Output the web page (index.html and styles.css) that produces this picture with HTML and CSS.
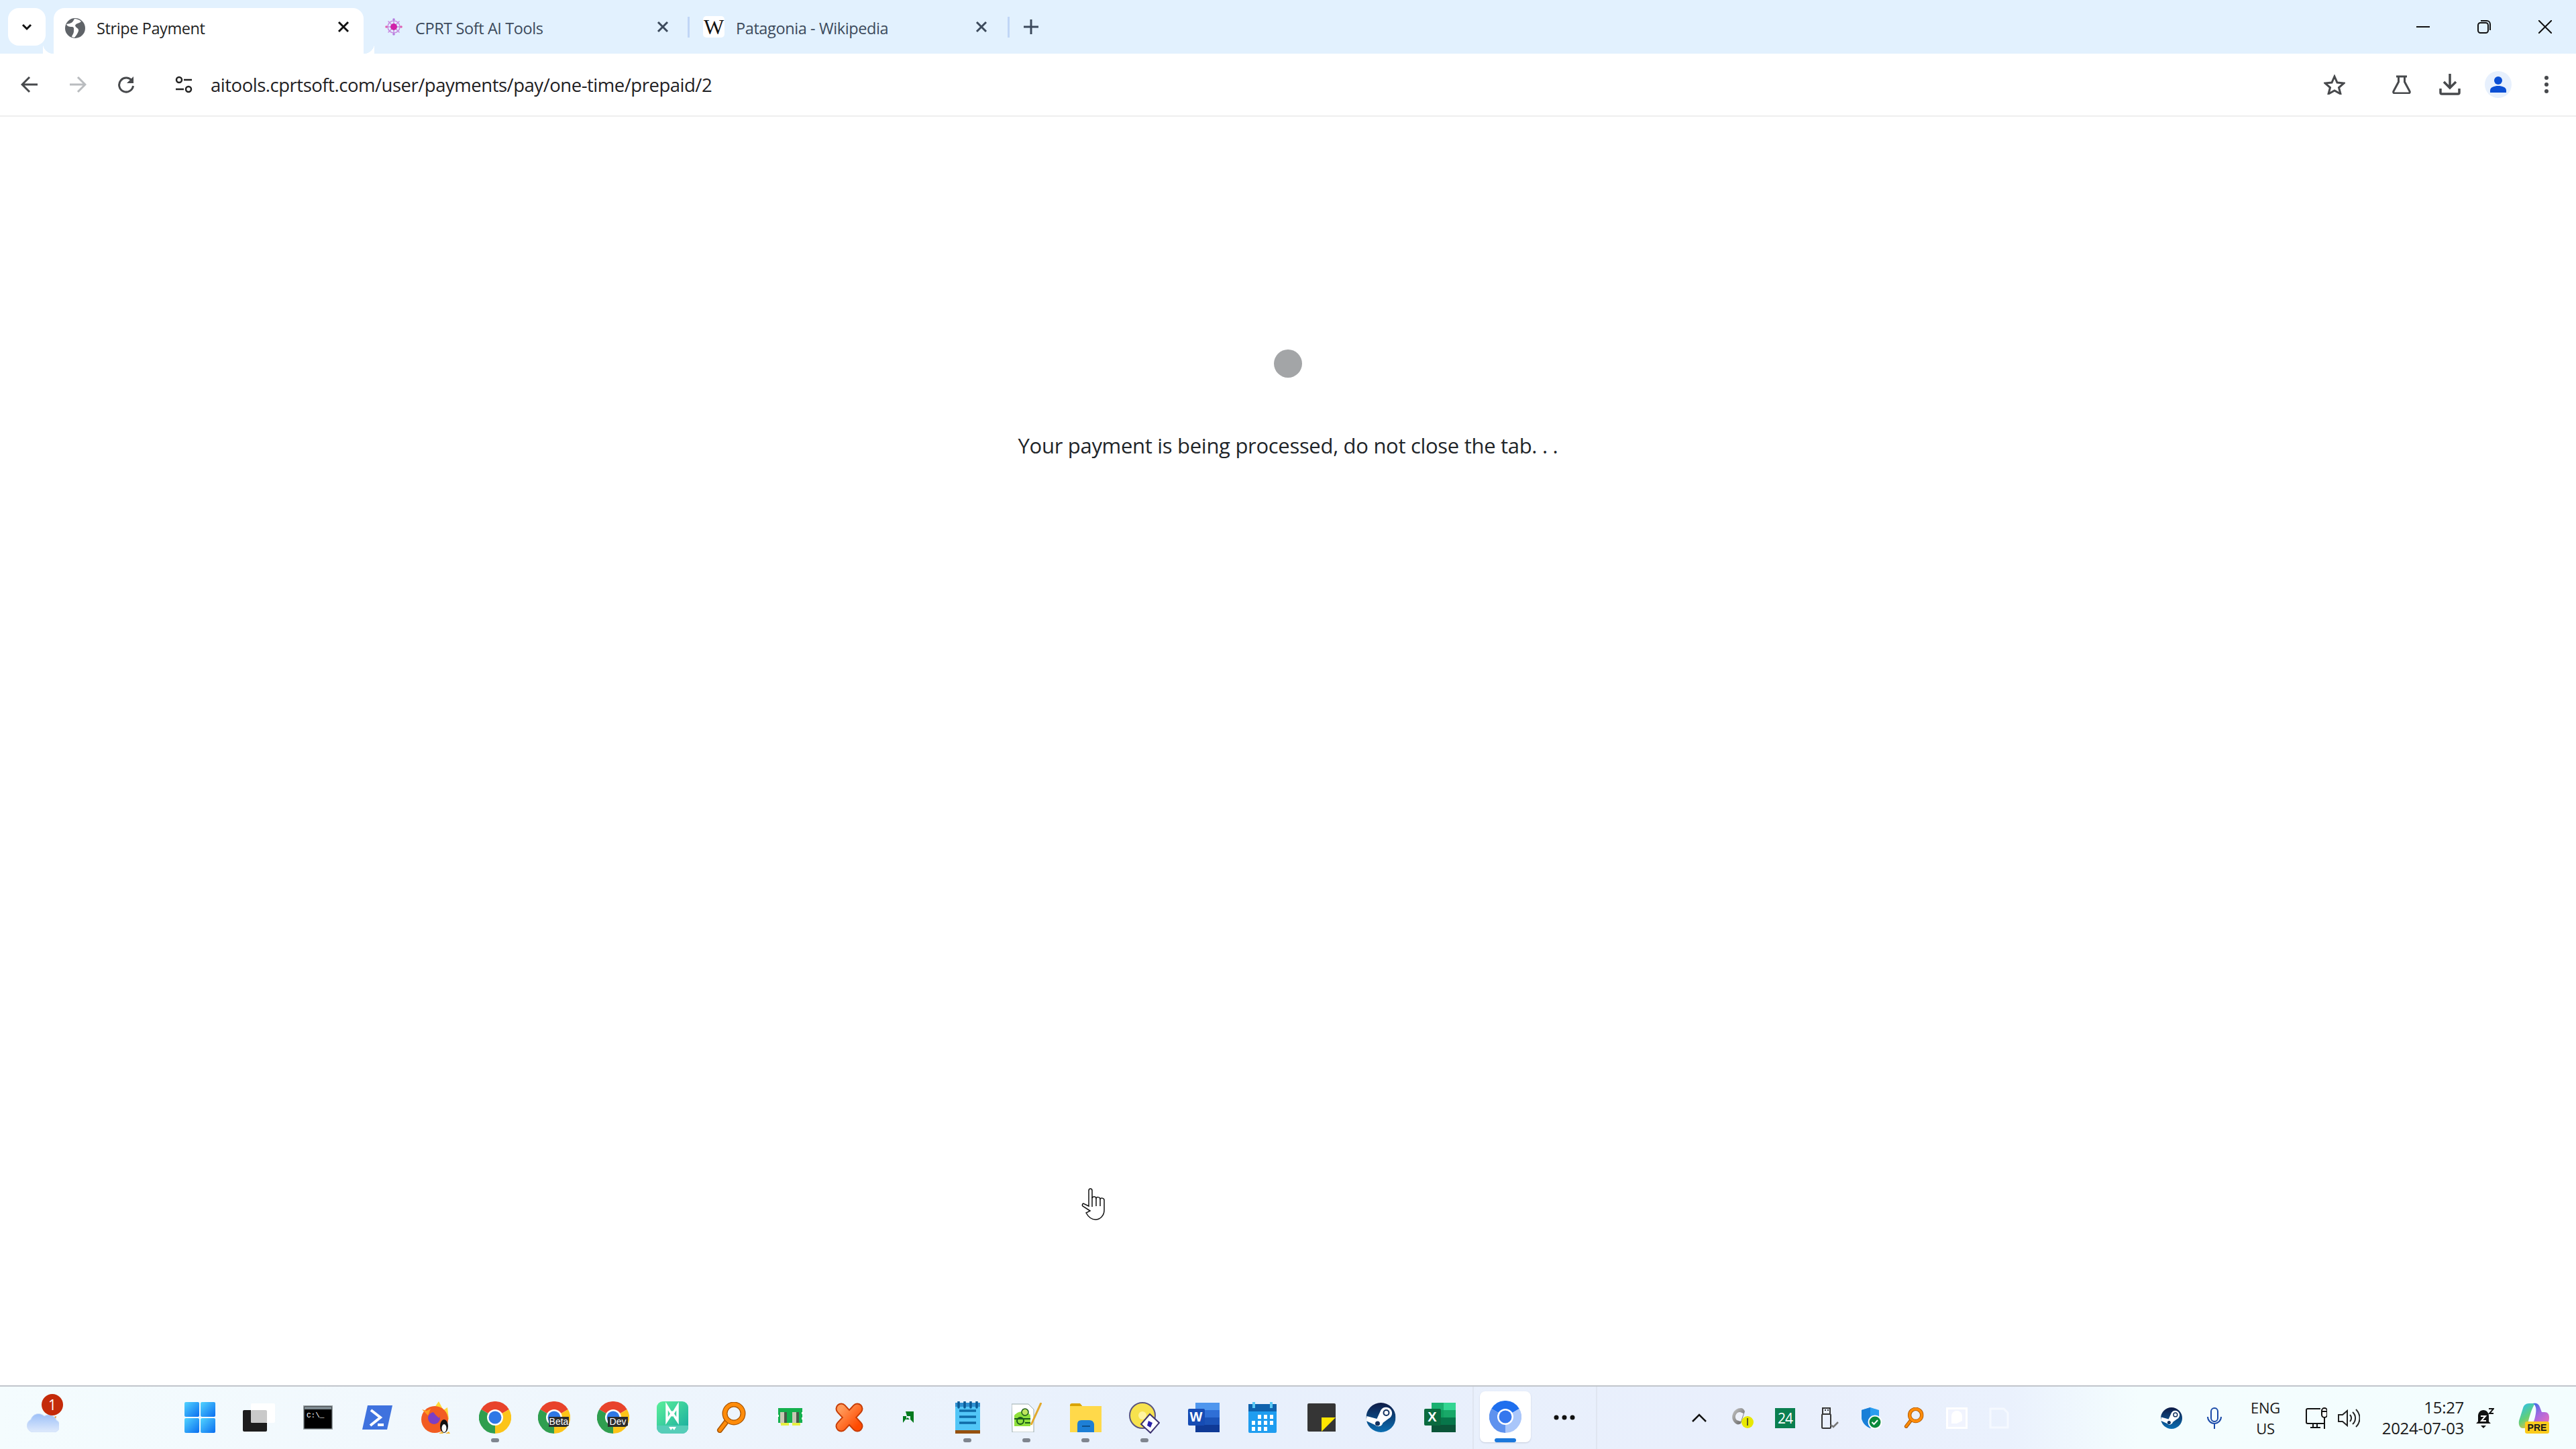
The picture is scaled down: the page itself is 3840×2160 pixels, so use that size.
FILE: index.html
```html
<!DOCTYPE html>
<html lang="en">
<head>
<meta charset="utf-8">
<title>Stripe Payment</title>
<link rel="stylesheet" href="styles.css">
</head>
<body>
<svg class="defs" width="0" height="0">
  <defs>
    <linearGradient id="gStart" x1="0" y1="0" x2="1" y2="1"><stop offset="0" stop-color="#52d4ff"/><stop offset="1" stop-color="#0a6ef0"/></linearGradient>
    <linearGradient id="gCloud" x1="0" y1="0" x2="0" y2="1"><stop offset="0" stop-color="#9cc0f8"/><stop offset="1" stop-color="#dfeafc"/></linearGradient>
    <linearGradient id="gWs" x1="0" y1="0" x2="1" y2="1"><stop offset="0" stop-color="#5cf09a"/><stop offset="1" stop-color="#15a9a0"/></linearGradient>
    <linearGradient id="gX" x1="0" y1="0" x2="1" y2="1"><stop offset="0" stop-color="#ff9a5a"/><stop offset="1" stop-color="#ff4a00"/></linearGradient>
    <linearGradient id="gSteam" x1="0" y1="0" x2="0" y2="1"><stop offset="0" stop-color="#0e1b46"/><stop offset="1" stop-color="#0b6eb2"/></linearGradient>
    <linearGradient id="gCop" x1="0.2" y1="0" x2="0.7" y2="1"><stop offset="0" stop-color="#2ec0ea"/><stop offset=".55" stop-color="#62cf78"/><stop offset="1" stop-color="#f0c040"/></linearGradient>
    <linearGradient id="gCop2" x1="0" y1="0" x2="0.8" y2="1"><stop offset="0" stop-color="#2070e8"/><stop offset=".5" stop-color="#a868e0"/><stop offset="1" stop-color="#ee70b8"/></linearGradient>
    <linearGradient id="gCloudT" x1="0" y1="0" x2="1" y2="1"><stop offset="0" stop-color="#c9c9c9"/><stop offset="1" stop-color="#5c5c5c"/></linearGradient>
    <symbol id="chrome" viewBox="0 0 48 48">
      <path d="M24 24L3.2 12A24 24 0 0 1 44.8 12Z" fill="#e8432b"/>
      <path d="M24 24L44.8 12A24 24 0 0 1 24 48Z" fill="#fcc419"/>
      <path d="M24 24L24 48A24 24 0 0 1 3.2 12Z" fill="#2f9e4f"/>
      <circle cx="24" cy="24" r="12" fill="#fff"/>
      <circle cx="24" cy="24" r="9.5" fill="#2f78e6"/>
    </symbol>
    <symbol id="lens" viewBox="0 0 44 46">
      <path d="M15 29L5 42" stroke="#a85400" stroke-width="8" stroke-linecap="round"/>
      <path d="M15 29L5 42" stroke="#ff8c0a" stroke-width="5" stroke-linecap="round"/>
      <circle cx="26" cy="17" r="13.5" fill="none" stroke="#a85400" stroke-width="8"/>
      <circle cx="26" cy="17" r="13.5" fill="none" stroke="#ff8c0a" stroke-width="5.5"/>
    </symbol>
    <symbol id="steam" viewBox="0 0 44 44">
      <circle cx="22" cy="22" r="22" fill="url(#gSteam)"/>
      <path d="M0 27L13 33A7 7 0 0 0 25 30L33 24A9 9 0 1 0 21 13L16 24L1 20Z" fill="#fff"/>
      <circle cx="30" cy="15" r="5" fill="#12315f"/><circle cx="30" cy="15" r="3" fill="#fff"/>
      <circle cx="17" cy="31" r="3.5" fill="#12315f"/>
    </symbol>
  </defs>
</svg>

<div class="page">
  <header class="strip">
    <button class="tablist">
      <svg width="22" height="22" viewBox="0 0 22 22"><path d="M5 8l6 6 6-6" fill="none" stroke="#111" stroke-width="3"/></svg>
    </button>
    <div class="tab tab-active">
      <svg class="fav" width="30" height="30" viewBox="0 0 30 30"><circle cx="15" cy="15" r="15" fill="#5f6368"/><path d="M14 1C11 7 9 8 2 9C3 13 8 13 11 13C14 14 13 17 13 20C13 23 10 26 10 28L14 29C17 26 19 22 20 19C21 15 16 15 15 11C17 7 21 8 24 5C21 2 17 1 14 1Z" fill="#fff"/></svg>
      <span class="tab-title dark">Stripe Payment</span>
      <svg class="tab-x" width="18" height="18" viewBox="0 0 18 18"><path d="M2 2l14 14M16 2L2 16" stroke="#111" stroke-width="3"/></svg>
    </div>
    <div class="tab tab-two">
      <svg class="fav lift" width="26" height="26" viewBox="0 0 26 26"><g fill="none" stroke="#c88be0" stroke-width="1.5"><circle cx="13" cy="13" r="9"/><path d="M13 1v24M1 13h24M4.500 4.500l17 17M21.500 4.500l-17 17"/></g><circle cx="13" cy="13" r="5" fill="#d022a8"/><circle cx="13" cy="2" r="1.800" fill="#b47ce0"/><circle cx="13" cy="24" r="1.800" fill="#b47ce0"/><circle cx="2" cy="13" r="1.800" fill="#e060b0"/><circle cx="24" cy="13" r="1.800" fill="#e060b0"/></svg>
      <span class="tab-title">CPRT Soft AI Tools</span>
      <svg class="tab-x" width="18" height="18" viewBox="0 0 18 18"><path d="M2 2l14 14M16 2L2 16" stroke="#3c4a5c" stroke-width="3"/></svg>
    </div>
    <i class="sep"></i>
    <div class="tab tab-three">
      <span class="wiki">W</span>
      <span class="tab-title">Patagonia - Wikipedia</span>
      <svg class="tab-x" width="18" height="18" viewBox="0 0 18 18"><path d="M2 2l14 14M16 2L2 16" stroke="#3c4a5c" stroke-width="3"/></svg>
    </div>
    <i class="sep"></i>
    <svg class="plus" width="22" height="22" viewBox="0 0 22 22"><path d="M11 0v22M0 11h22" stroke="#3c4a5c" stroke-width="3"/></svg>
    <div class="winctl">
      <svg width="20" height="20" viewBox="0 0 20 20"><path d="M0 10h20" stroke="#111" stroke-width="2"/></svg>
      <svg width="20" height="20" viewBox="0 0 20 20"><rect x="1" y="4" width="15" height="15" rx="3.500" fill="none" stroke="#111" stroke-width="2"/><path d="M5 1h9a5 5 0 0 1 5 5v9" fill="none" stroke="#111" stroke-width="2"/></svg>
      <svg width="20" height="20" viewBox="0 0 20 20"><path d="M0 0l20 20M20 0L0 20" stroke="#111" stroke-width="2"/></svg>
    </div>
  </header>

  <nav class="toolbar">
    <svg class="tb-back" width="26" height="26" viewBox="0 0 26 26"><path d="M25 13H3M13 2L2 13l11 11" fill="none" stroke="#47494c" stroke-width="3"/></svg>
    <svg class="tb-fwd" width="26" height="26" viewBox="0 0 26 26"><path d="M1 13h22M13 2l11 11-11 11" fill="none" stroke="#b9bcbf" stroke-width="3"/></svg>
    <svg class="tb-reload" width="26" height="26" viewBox="0 0 26 26"><path d="M22 8A10.500 10.500 0 1 0 23.500 15" fill="none" stroke="#47494c" stroke-width="3"/><path d="M24 1v10H14z" fill="#47494c"/></svg>
    <svg class="tb-tune" width="26" height="26" viewBox="0 0 26 26"><circle cx="6" cy="6" r="4" fill="none" stroke="#222" stroke-width="2.500"/><path d="M13 6h12M1 20h12" stroke="#222" stroke-width="2.500"/><circle cx="20" cy="20" r="4" fill="none" stroke="#222" stroke-width="2.500"/></svg>
    <span class="url">aitools.cprtsoft.com/user/payments/pay/one-time/prepaid/2</span>
    <div class="tb-right">
      <svg class="tb-star" width="32" height="30" viewBox="0 0 32 30"><path d="M16 3l4 9 10 1-7.500 6.500L25 29l-9-5-9 5 2.500-9.500L2 13l10-1z" fill="none" stroke="#47494c" stroke-width="3"/></svg>
      <svg class="tb-flask" width="28" height="28" viewBox="0 0 28 28"><path d="M6 2h16M9.500 2v8L2 24a2 2 0 0 0 2 3h20a2 2 0 0 0 2-3l-7.500-14V2" fill="none" stroke="#47494c" stroke-width="3"/></svg>
      <svg class="tb-dl" width="32" height="32" viewBox="0 0 32 32"><path d="M16 0v20M7 12l9 9 9-9" fill="none" stroke="#47494c" stroke-width="3.500"/><path d="M2 22v6a2 2 0 0 0 2 2h24a2 2 0 0 0 2-2v-6" fill="none" stroke="#47494c" stroke-width="3.500"/></svg>
      <div class="avatar"><svg width="26" height="26" viewBox="0 0 26 26"><circle cx="13" cy="7" r="6" fill="#0b4fd4"/><path d="M1 25v-3c0-5 6-7 12-7s12 2 12 7v3z" fill="#0b4fd4"/></svg></div>
      <svg class="tb-menu" width="8" height="28" viewBox="0 0 8 28"><circle cx="4" cy="4" r="3" fill="#47494c"/><circle cx="4" cy="14" r="3" fill="#47494c"/><circle cx="4" cy="24" r="3" fill="#47494c"/></svg>
    </div>
  </nav>

  <main class="content">
    <div class="spinner"></div>
    <p class="message">Your payment is being processed, do not close the tab. . .</p>
  </main>

  <footer class="taskbar">
    <div class="weather">
      <svg width="48" height="28" viewBox="0 0 48 28"><path d="M38 6l6-2-2 8z" fill="#f08a1c"/><path d="M10 28A10 10 0 0 1 6 9A12 12 0 0 1 26 4A12 12 0 0 1 44 10A9.500 9.500 0 0 1 40 28Z" fill="url(#gCloud)" stroke="#cfe0fa"/></svg>
      <span class="badge">1</span>
    </div>

    <div class="apps">
      <div class="slot"><svg width="46" height="46" viewBox="0 0 46 46"><rect width="22" height="22" rx="2" fill="url(#gStart)"/><rect x="24" width="22" height="22" rx="2" fill="url(#gStart)"/><rect y="24" width="22" height="22" rx="2" fill="url(#gStart)"/><rect x="24" y="24" width="22" height="22" rx="2" fill="url(#gStart)"/></svg></div>
      <div class="slot"><svg width="48" height="42" viewBox="0 0 48 42"><rect y="10" width="36" height="32" rx="2" fill="#1d1d1d"/><rect x="12" width="36" height="29" rx="2" fill="#fff"/><rect x="12" y="10" width="24" height="19" rx="2" fill="#c9c9c9"/></svg></div>
      <div class="slot"><svg width="44" height="36" viewBox="0 0 44 36"><rect x=".5" y=".5" width="43" height="35" rx="1" fill="#000" stroke="#9aa3a8" stroke-width="2"/><rect x="2" y="2" width="40" height="4" fill="#7e8a90"/><text x="5" y="18" class="cmd-text">C:\_</text></svg></div>
      <div class="slot"><svg width="46" height="36" viewBox="0 0 46 36"><path d="M9 0h37l-8 36H1z" fill="#3f72de"/><path d="M14 7l14 11-15 12" fill="none" stroke="#fff" stroke-width="4"/><path d="M24 29h9" stroke="#fff" stroke-width="4"/></svg></div>
      <div class="slot"><svg width="46" height="48" viewBox="0 0 46 48"><path d="M27 0l7 13 6-4 2 18H8z" fill="#ffd935"/><circle cx="21" cy="27" r="20" fill="#f25c22"/><path d="M2 12l7 2 6-3-4 10z" fill="#ff9a1f"/><circle cx="20" cy="25" r="9" fill="#7b3fc4"/><path d="M19 16c6-3 11 3 9 9-4-3-6-5-9-9z" fill="#f25c22"/><ellipse cx="35" cy="37" rx="6" ry="10" fill="#111"/><ellipse cx="35" cy="40" rx="3.500" ry="6" fill="#fff"/><path d="M27 48l5-3 2 3zM37 48l5-3 2 3z" fill="#fbb92c"/></svg></div>
      <div class="slot"><svg class="ic-48" viewBox="0 0 48 48"><use href="#chrome"/></svg><i class="run"></i></div>
      <div class="slot"><svg class="ic-48" viewBox="0 0 48 48"><use href="#chrome"/><path d="M16 23h30v13l-4 2H16z" fill="#2b2b2b"/><text x="31" y="35" class="chan-text">Beta</text></svg></div>
      <div class="slot"><svg class="ic-48" viewBox="0 0 48 48"><use href="#chrome"/><path d="M16 23h30v13l-4 2H16z" fill="#2b2b2b"/><text x="31" y="35" class="chan-text">Dev</text></svg></div>
      <div class="slot"><svg width="47" height="48" viewBox="0 0 47 48"><rect width="47" height="48" rx="9" fill="url(#gWs)"/><path d="M0 36h47v3a9 9 0 0 1-9 9H9a9 9 0 0 1-9-9z" fill="#56cdb8"/><path d="M15 7l8 13 8-13v22l-8-12-8 12z" fill="none" stroke="#fff" stroke-width="3.500"/><path d="M18 38l3 5 2.500-3 2.500 3 3-5z" fill="#fff"/></svg></div>
      <div class="slot"><svg width="44" height="46" viewBox="0 0 44 46"><use href="#lens"/></svg></div>
      <div class="slot"><svg width="40" height="27" viewBox="0 0 40 27"><rect x="2" width="36" height="22" fill="#14b04e"/><rect x="5" y="6" width="10" height="17" fill="#c9c9b4"/><rect x="23" y="6" width="10" height="17" fill="#c9c9b4"/><rect x="11" y="6" width="4" height="17" fill="#4a5a4a"/><rect x="29" y="6" width="4" height="17" fill="#4a5a4a"/><rect x="6" y="22" width="12" height="4" fill="#e6f040"/><rect x="23" y="22" width="12" height="4" fill="#e6f040"/><path d="M0 10h3v3H0zM37 6h3v3h-3zM37 14h3v3h-3z" fill="#fff"/></svg></div>
      <div class="slot"><svg width="44" height="46" viewBox="0 0 44 46"><path d="M10 10L34 36M34 10L10 36" stroke="#c63c06" stroke-width="17" stroke-linecap="round"/><path d="M10 10L34 36M34 10L10 36" stroke="url(#gX)" stroke-width="13" stroke-linecap="round"/></svg></div>
      <div class="slot"><svg width="16" height="17" viewBox="0 0 16 17"><path d="M4 0h12v17l-5-5V7H6zM0 17V7h5v4h-.5L0 17z" fill="#037a1e"/><path d="M4 12l3-3 3 3H4z" fill="#037a1e"/></svg></div>
      <div class="slot"><svg width="37" height="48" viewBox="0 0 37 48"><rect y="3" width="37" height="45" fill="#52c6f7"/><rect y="43" width="37" height="5" fill="#96510f"/><rect x="0" y="2" width="37" height="6" fill="#2f8fd0"/><path d="M5 0v9M14 0v9M23 0v9M32 0v9" stroke="#0b5b96" stroke-width="3.500" stroke-linecap="round"/><path d="M6 14h25M6 23h25M6 32h25" stroke="#0f6ba8" stroke-width="3.500"/></svg><i class="run"></i></div>
      <div class="slot"><svg width="45" height="44" viewBox="0 0 45 44"><path d="M0 2h25l8 8v34H1z" fill="#fff" stroke="#9aa" stroke-width="1"/><path d="M4 19c6-8 20-8 24 0v16H4z" fill="#8fe03c"/><circle cx="20" cy="14" r="5" fill="#bfe55e" stroke="#1a5a1a" stroke-width="1.500"/><circle cx="13" cy="27" r="5" fill="none" stroke="#1a5a1a" stroke-width="2"/><path d="M4 24h24M20 30h8" stroke="#1a5a1a" stroke-width="2"/><path d="M29 33L44 0" stroke="#e2a92c" stroke-width="3"/></svg><i class="run"></i></div>
      <div class="slot"><svg width="47" height="44" viewBox="0 0 47 44"><path d="M0 4a3 3 0 0 1 3-3h12l5 6H0z" fill="#d9a300"/><rect y="5" width="47" height="39" fill="#ffd94a"/><path d="M0 44V32q0-6 6-6h12q6 0 7 6v12z" fill="#1d7fd6" transform="translate(11 0)"/><path d="M18 35h12" stroke="#0b4f8c" stroke-width="2"/></svg><i class="run"></i></div>
      <div class="slot"><svg width="46" height="48" viewBox="0 0 46 48"><circle cx="20" cy="21" r="19" fill="#f7e24e" stroke="#5a5580" stroke-width="2"/><circle cx="20" cy="21" r="6" fill="#fff3a0"/><path d="M31 19l14 13-13 15-14-13z" fill="#fff" stroke="#3c3270" stroke-width="2"/><path d="M29 29l6 3-3 7-5-3z" fill="#2820a8"/></svg><i class="run"></i></div>
      <div class="slot"><svg width="47" height="44" viewBox="0 0 47 44"><rect x="11" width="36" height="44" rx="2" fill="#2f6fd6"/><rect x="11" width="36" height="11" fill="#4f96ee"/><rect x="11" y="22" width="36" height="11" fill="#1b53b8"/><rect x="11" y="33" width="36" height="11" fill="#0f3a96"/><rect y="9" width="25" height="25" rx="2" fill="#164cb4"/><text x="12" y="28" class="tile-text">W</text></svg></div>
      <div class="slot"><svg width="42" height="46" viewBox="0 0 42 46"><rect y="3" width="42" height="43" rx="2" fill="#1f9df0"/><rect y="3" width="42" height="11" fill="#0f62ad"/><path d="M6 0h4v9H6zM32 0h4v9h-4z" fill="#58c8f4"/><g fill="#fff"><rect x="14" y="19" width="5" height="6"/><rect x="23" y="19" width="5" height="6"/><rect x="32" y="19" width="5" height="6"/><rect x="5" y="28" width="5" height="6"/><rect x="14" y="28" width="5" height="6"/><rect x="23" y="28" width="5" height="6"/><rect x="32" y="28" width="5" height="6"/><rect x="5" y="37" width="5" height="6"/><rect x="14" y="37" width="5" height="6"/><rect x="23" y="37" width="5" height="6"/></g></svg></div>
      <div class="slot"><svg width="42" height="42" viewBox="0 0 42 42"><rect width="42" height="42" rx="2" fill="#353535"/><path d="M21 42L42 21v21z" fill="#353535"/><path d="M21 42V21h21z" fill="#ffe600"/></svg></div>
      <div class="slot"><svg width="45" height="44" viewBox="0 0 44 44"><use href="#steam"/></svg></div>
      <div class="slot slot-wide"><svg width="47" height="44" viewBox="0 0 47 44"><rect x="11" width="36" height="44" rx="2" fill="#10a060"/><rect x="29" width="18" height="11" fill="#33d592"/><rect x="11" width="18" height="11" fill="#1ab070"/><rect x="29" y="11" width="18" height="11" fill="#18a868"/><rect x="11" y="22" width="36" height="11" fill="#07764a"/><rect x="11" y="33" width="36" height="11" fill="#0a5538"/><rect y="9" width="25" height="25" rx="2" fill="#0b6b3f"/><text x="12" y="28" class="tile-text">X</text></svg></div>
      <div class="slot slot-active">
        <div class="tile"><svg class="ic-48" viewBox="0 0 48 48"><path d="M24 24L3.2 12A24 24 0 0 1 44.8 12Z" fill="#1f6fee"/><path d="M24 24L44.8 12A24 24 0 0 1 24 48Z" fill="#a9c6fa"/><path d="M24 24L24 48A24 24 0 0 1 3.2 12Z" fill="#5e92ee"/><circle cx="24" cy="24" r="12" fill="#fff"/><circle cx="24" cy="24" r="9.500" fill="#3577ee"/></svg></div>
        <i class="run-active"></i>
      </div>
      <div class="slot slot-more"><svg width="32" height="8" viewBox="0 0 32 8"><circle cx="4" cy="4" r="3.500" fill="#111"/><circle cx="16" cy="4" r="3.500" fill="#111"/><circle cx="28" cy="4" r="3.500" fill="#111"/></svg></div>
    </div>

    <div class="tray">
      <svg class="t-chev" width="22" height="14" viewBox="0 0 22 14"><path d="M1 12L11 2l10 10" fill="none" stroke="#111" stroke-width="2.500"/></svg>
      <svg class="t-cloud" width="33" height="30" viewBox="0 0 33 30"><path d="M14 0a13 13 0 0 0-9 22c3 3 6 3 9 1l6-18C19 2 17 0 14 0z" fill="url(#gCloudT)"/><path d="M13 6a7 7 0 0 0-5 12l6 2 4-12z" fill="#eef1fa"/><circle cx="24" cy="21" r="9" fill="#e8e800"/><path d="M24 15v11" stroke="#5a5a20" stroke-width="2"/></svg>
      <span class="t-24">24</span>
      <svg class="t-usb" width="27" height="32" viewBox="0 0 27 32"><rect x="2" y="10" width="13" height="21" rx="1.500" fill="none" stroke="#333" stroke-width="2"/><rect x="3" y="1" width="11" height="9" fill="none" stroke="#333" stroke-width="2"/><path d="M6 4h2M10 4h2" stroke="#333" stroke-width="2"/><path d="M15 26l4 3 7-7" fill="none" stroke="#777" stroke-width="2.500"/></svg>
      <svg class="t-shield" width="30" height="32" viewBox="0 0 30 32"><path d="M13 0l13 4v10c0 8-6 14-13 17C6 28 0 22 0 14V4z" fill="#2a9df0"/><path d="M13 0v31C6 28 0 22 0 14V4z" fill="#1a7fd8"/><circle cx="20" cy="22" r="9.500" fill="#0a8a3c" stroke="#fff" stroke-width="2"/><path d="M15.500 22l3 3 5.500-6" fill="none" stroke="#fff" stroke-width="2"/></svg>
      <svg class="t-lens" width="30" height="31" viewBox="0 0 44 46"><use href="#lens"/></svg>
      <svg class="t-ghost" width="32" height="32" viewBox="0 0 32 32"><rect x="1.500" y="1.500" width="29" height="29" fill="#f1f4fe" stroke="#fff" stroke-width="3"/><path d="M8 24V13a8 8 0 0 1 16 0v7l-8 4z" fill="#fff"/></svg>
      <svg class="t-faint" width="34" height="32" viewBox="0 0 34 32"><path d="M4 2h20l6 6v22H4z" fill="none" stroke="#f5f9ff" stroke-width="3"/></svg>
      <svg class="t-steam" width="32" height="32" viewBox="0 0 44 44"><use href="#steam"/></svg>
      <svg class="t-mic" width="22" height="32" viewBox="0 0 22 32"><rect x="6" y="1" width="10" height="20" rx="5" fill="none" stroke="#1a4aa8" stroke-width="2"/><path d="M1 14a10 10 0 0 0 20 0M11 24v8" fill="none" stroke="#1a4aa8" stroke-width="2"/></svg>
      <div class="lang"><span>ENG</span><span>US</span></div>
      <svg class="t-net" width="32" height="32" viewBox="0 0 32 32"><path d="M22 2H3a2 2 0 0 0-2 2v18a2 2 0 0 0 2 2h25" fill="none" stroke="#111" stroke-width="2"/><path d="M11 24v6M17 24v6M7 30h15" stroke="#111" stroke-width="2"/><rect x="24" y="1" width="8" height="14" rx="4" fill="#fff" stroke="#111" stroke-width="2"/><path d="M25 6h6M28 15v17" stroke="#111" stroke-width="2"/></svg>
      <svg class="t-vol" width="33" height="28" viewBox="0 0 33 28"><path d="M1 9h6l7-6v22l-7-6H1z" fill="none" stroke="#222" stroke-width="2"/><path d="M18 9a7 7 0 0 1 0 10M22 5a12 12 0 0 1 0 18M27 1a18 18 0 0 1 0 26" fill="none" stroke="#222" stroke-width="2"/></svg>
      <div class="clock"><span>15:27</span><span>2024-07-03</span></div>
      <svg class="t-bell" width="27" height="30" viewBox="0 0 27 30"><path d="M11 3c5 0 8 4 8 9v8l3 3H0l3-3v-8c0-5 3-9 8-9z" fill="#111"/><path d="M7 26h8l-4 4z" fill="#111"/><path d="M19 1h7l-6 7h6" fill="none" stroke="#111" stroke-width="2"/><path d="M7 12h7l-6 7h7" fill="none" stroke="#fff" stroke-width="2"/></svg>
      <div class="copilot"><svg width="46" height="40" viewBox="0 0 46 40"><path d="M16 1h9C20 8 16 22 14 32c-1 4-3 6-7 6C2 38 0 33 1 27L7 8C8 4 11 1 16 1z" fill="url(#gCop)"/><path d="M22 1c6-1 9 1 11 8l2 5h4c5 0 7 3 7 8 0 8-4 16-11 16H18c5-6 10-24 8-31-1-3-2-5-4-6z" fill="url(#gCop2)"/></svg><span class="pre">PRE</span></div>
    </div>
  </footer>

  <svg class="hand" width="36" height="48" viewBox="0 0 36 48"><path d="M13 34L2 27c-1-1-1-3 1-4l6 3 2 1V4c0-4 5-4 5 0v11c1-3 5-3 6 0 1-2 5-2 6 1 1-2 6-1 6 2v15c0 8-6 14-13 14-6 0-10-3-14-10z" fill="#fff" stroke="#111" stroke-width="1.500"/><path d="M16 14v14M22 15v12M28 16v11" stroke="#111" stroke-width="1.500"/></svg>
</div>
</body>
</html>
```
FILE: styles.css
```css
* { box-sizing: border-box; }
html, body { margin: 0; padding: 0; }
body { font-family: "Open Sans", "Noto Sans", sans-serif; background: #fff; overflow: hidden; }
.defs { position: absolute; }
.page { position: relative; width: 3840px; height: 2160px; display: flex; flex-direction: column; background: #fff; }

/* tab strip */
.strip { height: 80px; background: #e2f1fe; display: flex; align-items: flex-start; padding: 12px 0 0 12px; flex: none; }
.tablist { width: 56px; height: 56px; border: 0; padding: 0; border-radius: 16px; background: #fff; display: flex; align-items: center; justify-content: center; margin-right: 12px; }
.tab { height: 68px; display: flex; align-items: center; flex: none; }
.tab-active { width: 462px; background: #fff; border-radius: 16px 16px 0 0; padding: 0 21px 8px 17px; position: relative; }
.tab-active::before, .tab-active::after { content: ""; position: absolute; bottom: 0; width: 16px; height: 16px; background: radial-gradient(circle at 100% 0, #e2f1fe 16px, #fff 16.500px); }
.tab-active::before { left: -16px; }
.tab-active::after { right: -16px; transform: scaleX(-1); }
.fav { flex: none; }
.lift { margin-top: -5px; }
.tab-title { font-size: 23.500px; letter-spacing: -.4px; color: #3c4a5c; white-space: nowrap; flex: 1; line-height: 30px; }
.tab-title.dark { color: #1f1f1f; margin-left: 17px; }
.tab-x { flex: none; margin-top: -4px; }
.tab-two { width: 483px; padding: 0 28px 8px 32px; }
.tab-two .tab-title { margin-left: 19px; }
.sep { width: 3px; height: 31px; background: #c0d6f6; margin-top: 13px; flex: none; }
.tab-three { width: 474px; padding: 0 30px 8px 20px; }
.tab-three .tab-title { margin-left: 17px; }
.wiki { width: 32px; height: 32px; background: #fff; border-radius: 5px; flex: none; font-family: "Liberation Serif", serif; font-size: 32px; line-height: 32px; text-align: center; color: #111; display: block; margin-top: -4px; }
.plus { margin: 17px 0 0 21px; flex: none; }
.winctl { margin-left: auto; display: flex; align-items: center; gap: 71px; padding-right: 36px; height: 56px; }

/* toolbar */
.toolbar { height: 94px; background: #fff; border-bottom: 2px solid #eeeeee; display: flex; align-items: center; padding: 0 40px 0 31px; flex: none; }
.tb-back { margin-right: 46px; }
.tb-fwd { margin-right: 46px; }
.tb-reload { margin-right: 60px; }
.tb-tune { margin-right: 27px; }
.url { font-size: 27.500px; letter-spacing: -.48px; color: #1f2124; white-space: nowrap; }
.tb-right { margin-left: auto; display: flex; align-items: center; }
.tb-star { margin-right: 70px; }
.tb-flask { margin-right: 42px; }
.tb-dl { margin-right: 36px; }
.avatar { width: 40px; height: 40px; border-radius: 50%; background: #e7f0fd; display: flex; align-items: center; justify-content: center; margin-right: 48px; }

/* content */
.content { flex: 1; display: flex; flex-direction: column; align-items: center; padding-top: 347px; background: #fff; }
.spinner { width: 42px; height: 42px; border-radius: 50%; background: #a3a5a7; }
.message { margin: 79px 0 0; font-size: 31px; letter-spacing: -.3px; line-height: 44px; color: #212529; white-space: nowrap; }

/* taskbar */
.taskbar { height: 95px; flex: none; border-top: 2px solid #c1c5cb; background: linear-gradient(90deg, #f4fcfe 0%, #f1f8fd 15%, #e8f0fc 45%, #e9effc 70%, #eaf1fd 78%, #f4fdfe 83%, #f3fdfe 100%); display: flex; align-items: center; }
.weather { width: 48px; margin-left: 40px; height: 93px; position: relative; display: flex; align-items: flex-end; padding-bottom: 25px; flex: none; }
.badge { position: absolute; left: 22px; top: 11px; width: 32px; height: 32px; border-radius: 50%; background: #c42b0a; color: #fff; font-size: 21px; line-height: 32px; text-align: center; }
.apps { display: flex; align-items: center; margin-left: 166px; flex: none; height: 93px; }
.slot { width: 88px; height: 93px; padding-bottom: 2px; display: flex; align-items: center; justify-content: center; position: relative; flex: none; }
.slot-wide { margin-right: 10px; }
.slot-active { align-items: flex-start; }
.slot-active::before { content: ""; position: absolute; left: -5px; top: 0; bottom: 0; width: 2px; background: #dfe5f0; }
.slot-more::after { content: ""; position: absolute; right: -5px; top: 0; bottom: 0; width: 2px; background: #dfe5f0; }
.tile { width: 76px; height: 76px; background: #fff; border-radius: 8px; margin-top: 7px; display: flex; align-items: center; justify-content: center; box-shadow: 0 1px 2px rgba(90,100,130,.25); position: relative; }
.ic-48 { width: 48px; height: 48px; display: block; }
.run { position: absolute; left: 50%; margin-left: -6px; bottom: 10px; width: 12px; height: 6px; border-radius: 3px; background: #7f858f; }
.run-active { position: absolute; left: 50%; margin-left: -16px; top: 77px; width: 32px; height: 6px; border-radius: 3px; background: #1a78dc; }
.cmd-text { font-family: "Liberation Mono", monospace; font-size: 11px; fill: #fff; }
.chan-text { font-family: "Liberation Sans", sans-serif; font-size: 14px; fill: #fff; text-anchor: middle; }
.tile-text { font-family: "Liberation Sans", sans-serif; font-size: 20px; font-weight: 700; fill: #fff; text-anchor: middle; }

/* tray */
.tray { margin-left: auto; flex: none; display: flex; align-items: center; height: 93px; padding-right: 40px; }
.t-24 { width: 30px; height: 30px; background: #0a7f50; color: #fff; font-size: 21px; letter-spacing: -1px; line-height: 30px; text-align: center; margin-left: 32px; }
.t-chev { margin-right: 37px; }
.t-usb { margin-left: 38px; }
.t-shield { margin-left: 34px; }
.t-lens { margin-left: 33px; }
.t-ghost { margin-left: 33px; }
.t-faint { margin-left: 30px; }
.t-steam { margin-left: 224px; }
.t-mic { margin-left: 37px; }
.lang { display: flex; flex-direction: column; align-items: center; width: 50px; margin-left: 40px; font-size: 22px; line-height: 31px; letter-spacing: -.3px; color: #1b1b1b; }
.t-net { margin-left: 35px; }
.t-vol { margin-left: 16px; }
.clock { display: flex; flex-direction: column; align-items: flex-end; width: 125px; margin-left: 30px; padding-bottom: 2px; font-size: 24px; line-height: 31px; letter-spacing: -.3px; color: #1b1b1b; }
.t-bell { margin-left: 18px; }
.copilot { position: relative; width: 46px; height: 46px; margin-left: 36px; }
.copilot svg { display: block; }
.pre { position: absolute; right: 0; bottom: 0; width: 36px; height: 18px; border-radius: 3px; background: #fbcb1c; color: #1a1a1a; font-family: "Liberation Sans", sans-serif; font-size: 14px; font-weight: 700; line-height: 18px; text-align: center; }

.hand { position: absolute; left: 1612px; top: 1771px; }
```
